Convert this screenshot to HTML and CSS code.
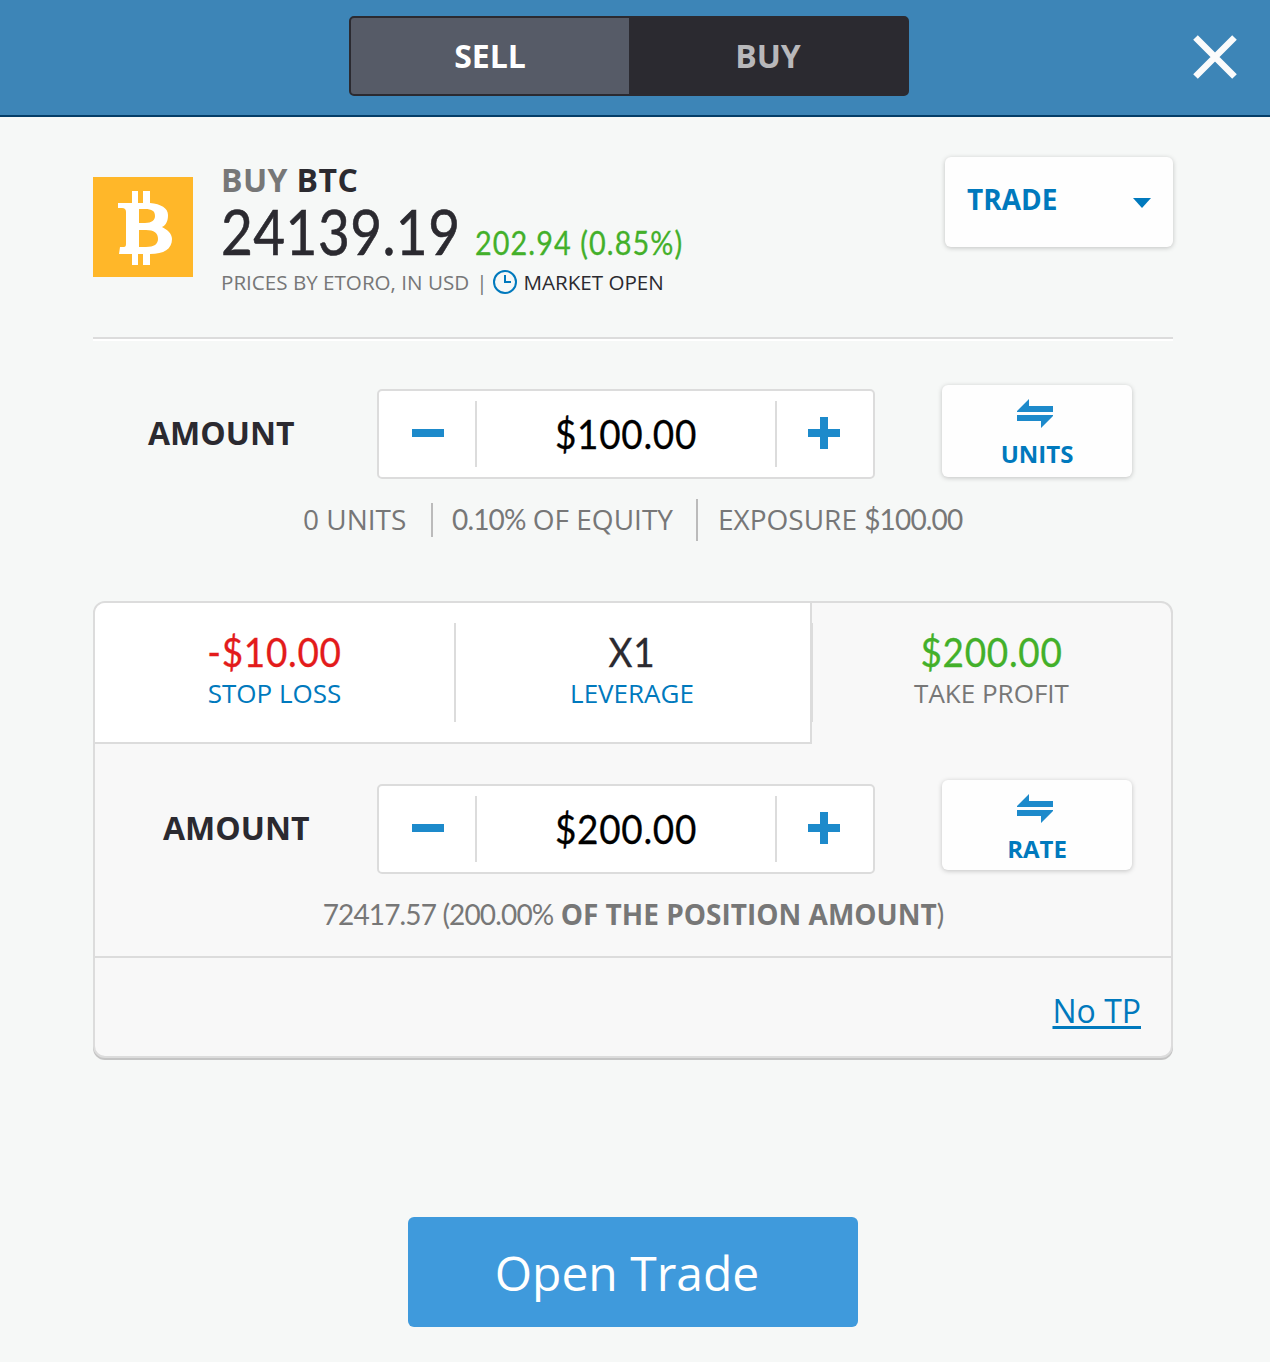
FILE: index.html
```html
<!DOCTYPE html>
<html lang="en">
  <head>
    <meta charset="UTF-8" />
    <meta name="viewport" content="width=device-width, initial-scale=1.0" />
    <title>Buy BTC</title>
    <link rel="stylesheet" href="styles.css">
  </head>
  <body>
    <svg class="sprite">
      <symbol id="swap" viewBox="0 0 36 29">
        <path d="M0 13V12L12 0V7H36V13ZM0 16H36V17L24 29V22H0Z" />
      </symbol>
      <symbol id="minus" viewBox="0 0 32 32">
        <path d="M0 12H32V20H0Z" />
      </symbol>
      <symbol id="plus" viewBox="0 0 32 32">
        <path d="M12 0H20V12H32V20H20V32H12V20H0V12H12Z" />
      </symbol>
    </svg>

    <header>
      <div class="side-toggle">
        <button class="side active">SELL</button>
        <button class="side">BUY</button>
      </div>
      <button class="close" aria-label="Close">
        <svg width="44" height="44" viewBox="0 0 44 44"><path d="M2.5 2.5L41.5 41.5M41.5 2.5L2.5 41.5" /></svg>
      </button>
    </header>

    <main>
      <section class="quote">
        <svg class="coin" width="100" height="100" viewBox="0 0 100 100">
          <rect width="100" height="100" fill="#ffb729" />
          <path fill="#fff" fill-rule="evenodd" d="M39 14H45V26H50V14H57V26C68 27 75 31 75 38C75 44 73 48 69 50C75 53 79 57 79 62C79 72 71 77 57 77V88H50V77H45V88H39V77H26L27 70H31Q33 70 33 67V35Q33 31 29 31H25V26H39ZM46 32V46H52C59 46 62 43 62 39C62 34 59 32 52 32ZM46 53V70H53C61 70 65 67 65 62C65 56 61 53 53 53Z" />
        </svg>
        <div class="quote-info">
          <div class="title"><span>BUY</span> BTC</div>
          <div class="price"><span class="num rate">24139.19</span><span class="num change">202.94 (0.85%)</span></div>
          <div class="meta">
            <span class="source">PRICES BY ETORO, IN USD</span>
            <span class="bar">|</span>
            <svg width="24" height="24" viewBox="0 0 24 24"><circle cx="12" cy="12" r="11" /><path d="M12 5V12H18" /></svg>
            <span class="market">MARKET OPEN</span>
          </div>
        </div>
        <button class="card order-type">TRADE <i class="caret"></i></button>
      </section>

      <section class="amount">
        <div class="row">
          <label>AMOUNT</label>
          <div class="stepper">
            <button><svg><use href="#minus" /></svg></button>
            <div class="value"><span class="num big">$100.00</span></div>
            <button><svg><use href="#plus" /></svg></button>
          </div>
          <button class="card switch"><svg><use href="#swap" /></svg>UNITS</button>
        </div>
        <div class="summary">
          <span class="units">0 UNITS</span>
          <span class="equity"><b class="num">0.10%</b> OF EQUITY</span>
          <span class="exposure">EXPOSURE <b class="num">$100.00</b></span>
        </div>
      </section>

      <section class="panel">
        <div class="tabs">
          <div class="tab">
            <div class="num big loss">-$10.00</div>
            <div class="tab-label">STOP LOSS</div>
          </div>
          <div class="tab">
            <div class="num big">X1</div>
            <div class="tab-label">LEVERAGE</div>
          </div>
          <div class="tab current">
            <div class="num big profit">$200.00</div>
            <div class="tab-label">TAKE PROFIT</div>
          </div>
        </div>
        <div class="panel-body">
          <div class="row">
            <label>AMOUNT</label>
            <div class="stepper">
              <button><svg><use href="#minus" /></svg></button>
              <div class="value"><span class="num big">$200.00</span></div>
              <button><svg><use href="#plus" /></svg></button>
            </div>
            <button class="card switch"><svg><use href="#swap" /></svg>RATE</button>
          </div>
          <div class="position"><span class="num">72417.57 (200.00%</span> <strong>OF THE POSITION AMOUNT</strong><span class="num">)</span></div>
        </div>
        <div class="panel-footer"><a href="#">No TP</a></div>
      </section>

      <button class="submit">Open Trade</button>
    </main>
  </body>
</html>
```
FILE: styles.css
```css
* {
  box-sizing: border-box;
}

body {
  margin: 0;
  min-height: 1362px;
  background: #f6f8f7;
  color: #2b2a30;
  font-family: 'Open Sans', 'Noto Sans', sans-serif;
}

button {
  padding: 0;
  border: none;
  background: none;
  color: inherit;
  font: inherit;
  cursor: pointer;
}

svg {
  display: block;
}

.sprite {
  position: absolute;
  width: 0;
  height: 0;
}

.num {
  font-family: Lato, 'Open Sans', sans-serif;
  font-weight: 400;
  letter-spacing: -0.85px;
}

/* narrow digits */
.big {
  display: block;
  font-size: 41px;
  line-height: 44px;
  letter-spacing: 0.8px;
  transform: scaleX(0.9);
  -webkit-text-stroke: 0.3px;
}

header {
  display: grid;
  grid-template-columns: 349px 560px 1fr;
  height: 117px;
  padding: 16px 33px 0 0;
  background: #3d85b7;
  border-bottom: 2px solid #053e68;
}

.side-toggle {
  grid-column: 2;
  display: flex;
  height: 80px;
  border: 2px solid #2b2a30;
  border-radius: 5px;
  background: #2b2a30;
}

.side {
  flex: 1;
  padding-bottom: 2px;
  color: #b8b8bb;
  font-size: 32px;
  font-weight: 700;
}

.side.active {
  background: #565b67;
  border-radius: 3px 0 0 3px;
  color: #fff;
}

.close {
  justify-self: end;
  height: 44px;
  margin-top: 19px;
}

.close path {
  stroke: #fbfbfb;
  stroke-width: 6.5;
}

main {
  width: 1080px;
  margin-left: 93px;
}

.quote {
  display: flex;
  align-items: flex-start;
  height: 222px;
  padding-top: 40px;
  border-bottom: 2px solid #dcdcdc;
  box-shadow: 0 2px 0 #fff;
}

.coin {
  margin-top: 20px;
}

.quote-info {
  flex: 1;
  margin: 7px 0 0 28px;
  white-space: nowrap;
}

.title {
  font-size: 32px;
  font-weight: 700;
  line-height: 32px;
  letter-spacing: 0.4px;
}

.title span {
  color: #777;
}

.price {
  display: flex;
  align-items: baseline;
  height: 60px;
  margin-top: 6px;
  line-height: 60px;
}

.rate,
.change {
  transform: scaleX(0.9);
  transform-origin: left;
}

.rate {
  width: 254px;
  font-size: 61px;
  letter-spacing: 0.5px;
  -webkit-text-stroke: 0.6px;
}

.change {
  color: #43b02a;
  font-size: 32px;
  letter-spacing: 1.2px;
  -webkit-text-stroke: 0.3px;
}

.meta {
  display: flex;
  align-items: center;
  margin-top: 8px;
  font-size: 20.6px;
  line-height: 24px;
}

.source,
.bar {
  color: #777;
}

.bar {
  margin: 0 6px 0 7px;
}

.meta svg {
  margin-right: 6px;
  fill: none;
  stroke: #0079bd;
  stroke-width: 2;
}

.card {
  border-radius: 6px;
  background: #fefefe;
  box-shadow: 0 1px 5px rgba(0, 0, 0, 0.22);
  color: #0079bd;
  font-weight: 700;
}

.order-type {
  display: flex;
  align-items: center;
  justify-content: space-between;
  width: 228px;
  height: 90px;
  padding: 0 22px 7px;
  font-size: 28px;
}

.caret {
  margin-top: 8px;
  border: 9px solid transparent;
  border-top: 10px solid #0079bd;
  border-bottom: 0;
}

.amount {
  padding-top: 46px;
}

.row {
  display: grid;
  grid-template-columns: 284px 498px 190px;
  align-items: start;
}

.row label {
  align-self: center;
  padding-left: 55px;
  font-size: 32px;
  font-weight: 700;
}

.stepper {
  display: flex;
  align-items: center;
  height: 90px;
  margin-top: 4px;
  border: 2px solid #dcdcdc;
  border-radius: 5px;
  background: #fff;
}

.stepper button {
  display: flex;
  justify-content: center;
  width: 96px;
  padding: 0 0 2px 2px;
}

.stepper button:last-child {
  padding: 0 2px 2px 0;
}

.stepper svg {
  width: 32px;
  height: 32px;
  fill: #1d8acb;
}

.value {
  flex: 1;
  height: 66px;
  padding-top: 11px;
  border: solid #dcdcdc;
  border-width: 0 2px;
  color: #000;
  text-align: center;
}

.switch {
  display: flex;
  flex-direction: column;
  align-items: center;
  width: 190px;
  height: 92px;
  margin-left: 67px;
  padding-top: 14px;
  font-size: 24px;
  line-height: 52px;
}

.switch svg {
  flex-shrink: 0;
  width: 36px;
  height: 29px;
  margin-right: 4px;
  fill: #1d8acb;
}

.summary {
  display: flex;
  align-items: center;
  height: 42px;
  margin-top: 20px;
  padding-left: 210px;
  color: #777;
  font-size: 28px;
  line-height: 32px;
  white-space: nowrap;
}

.units {
  width: 130px;
  padding-bottom: 2px;
  border-right: 2px solid #bbb;
}

.equity {
  width: 265px;
  padding: 0 0 2px 19px;
  border-right: 2px solid #bbb;
  line-height: 40px;
}

.exposure {
  padding: 0 0 2px 20px;
}

.panel {
  height: 457px;
  margin-top: 60px;
  border: 2px solid #dcdcdc;
  border-radius: 12px;
  background: #f8f8f8;
  box-shadow: 0 2px 0 #c4c4c4;
}

.tabs {
  display: grid;
  grid-template-columns: 359px 358px 1fr;
  height: 141px;
}

.tab {
  position: relative;
  padding-top: 27px;
  border-bottom: 2px solid #dcdcdc;
  background: #fff;
  text-align: center;
}

.tab:first-child {
  z-index: 1;
  border-top-left-radius: 10px;
}

.tab:nth-child(2) {
  border-right: 2px solid #dcdcdc;
}

.tab:not(.current)::after {
  content: '';
  position: absolute;
  top: 20px;
  right: -2px;
  width: 2px;
  height: 99px;
  background: #dcdcdc;
}

.tab:nth-child(2)::after {
  right: -3px;
}

.tab.current {
  border-bottom: none;
  background: none;
}

.loss {
  color: #e31b1b;
}

.profit {
  color: #43b02a;
}

.tab-label {
  margin-top: 3px;
  color: #0079bd;
  font-size: 26px;
  line-height: 32px;
}

.current .tab-label {
  color: #777;
}

.panel-body {
  height: 214px;
  padding-top: 36px;
  border-bottom: 2px solid #dcdcdc;
}

.panel-body .row {
  grid-template-columns: 282px 498px 190px;
}

.panel-body label {
  padding-left: 68px;
}

.panel-body .switch {
  height: 90px;
}

.position {
  margin-top: 21px;
  color: #777;
  font-size: 28px;
  line-height: 38px;
  text-align: center;
}

.panel-footer {
  padding: 31px 30px 0 0;
  font-size: 32px;
  line-height: 44px;
  text-align: right;
}

.panel-footer a {
  color: #0079bd;
  text-decoration-thickness: 3px;
  text-underline-offset: 3px;
}

.submit {
  display: block;
  width: 450px;
  height: 110px;
  margin: 159px 0 0 315px;
  padding-right: 12px;
  border-radius: 6px;
  background: #3f9adc;
  color: #fff;
  font-size: 48px;
}
```
